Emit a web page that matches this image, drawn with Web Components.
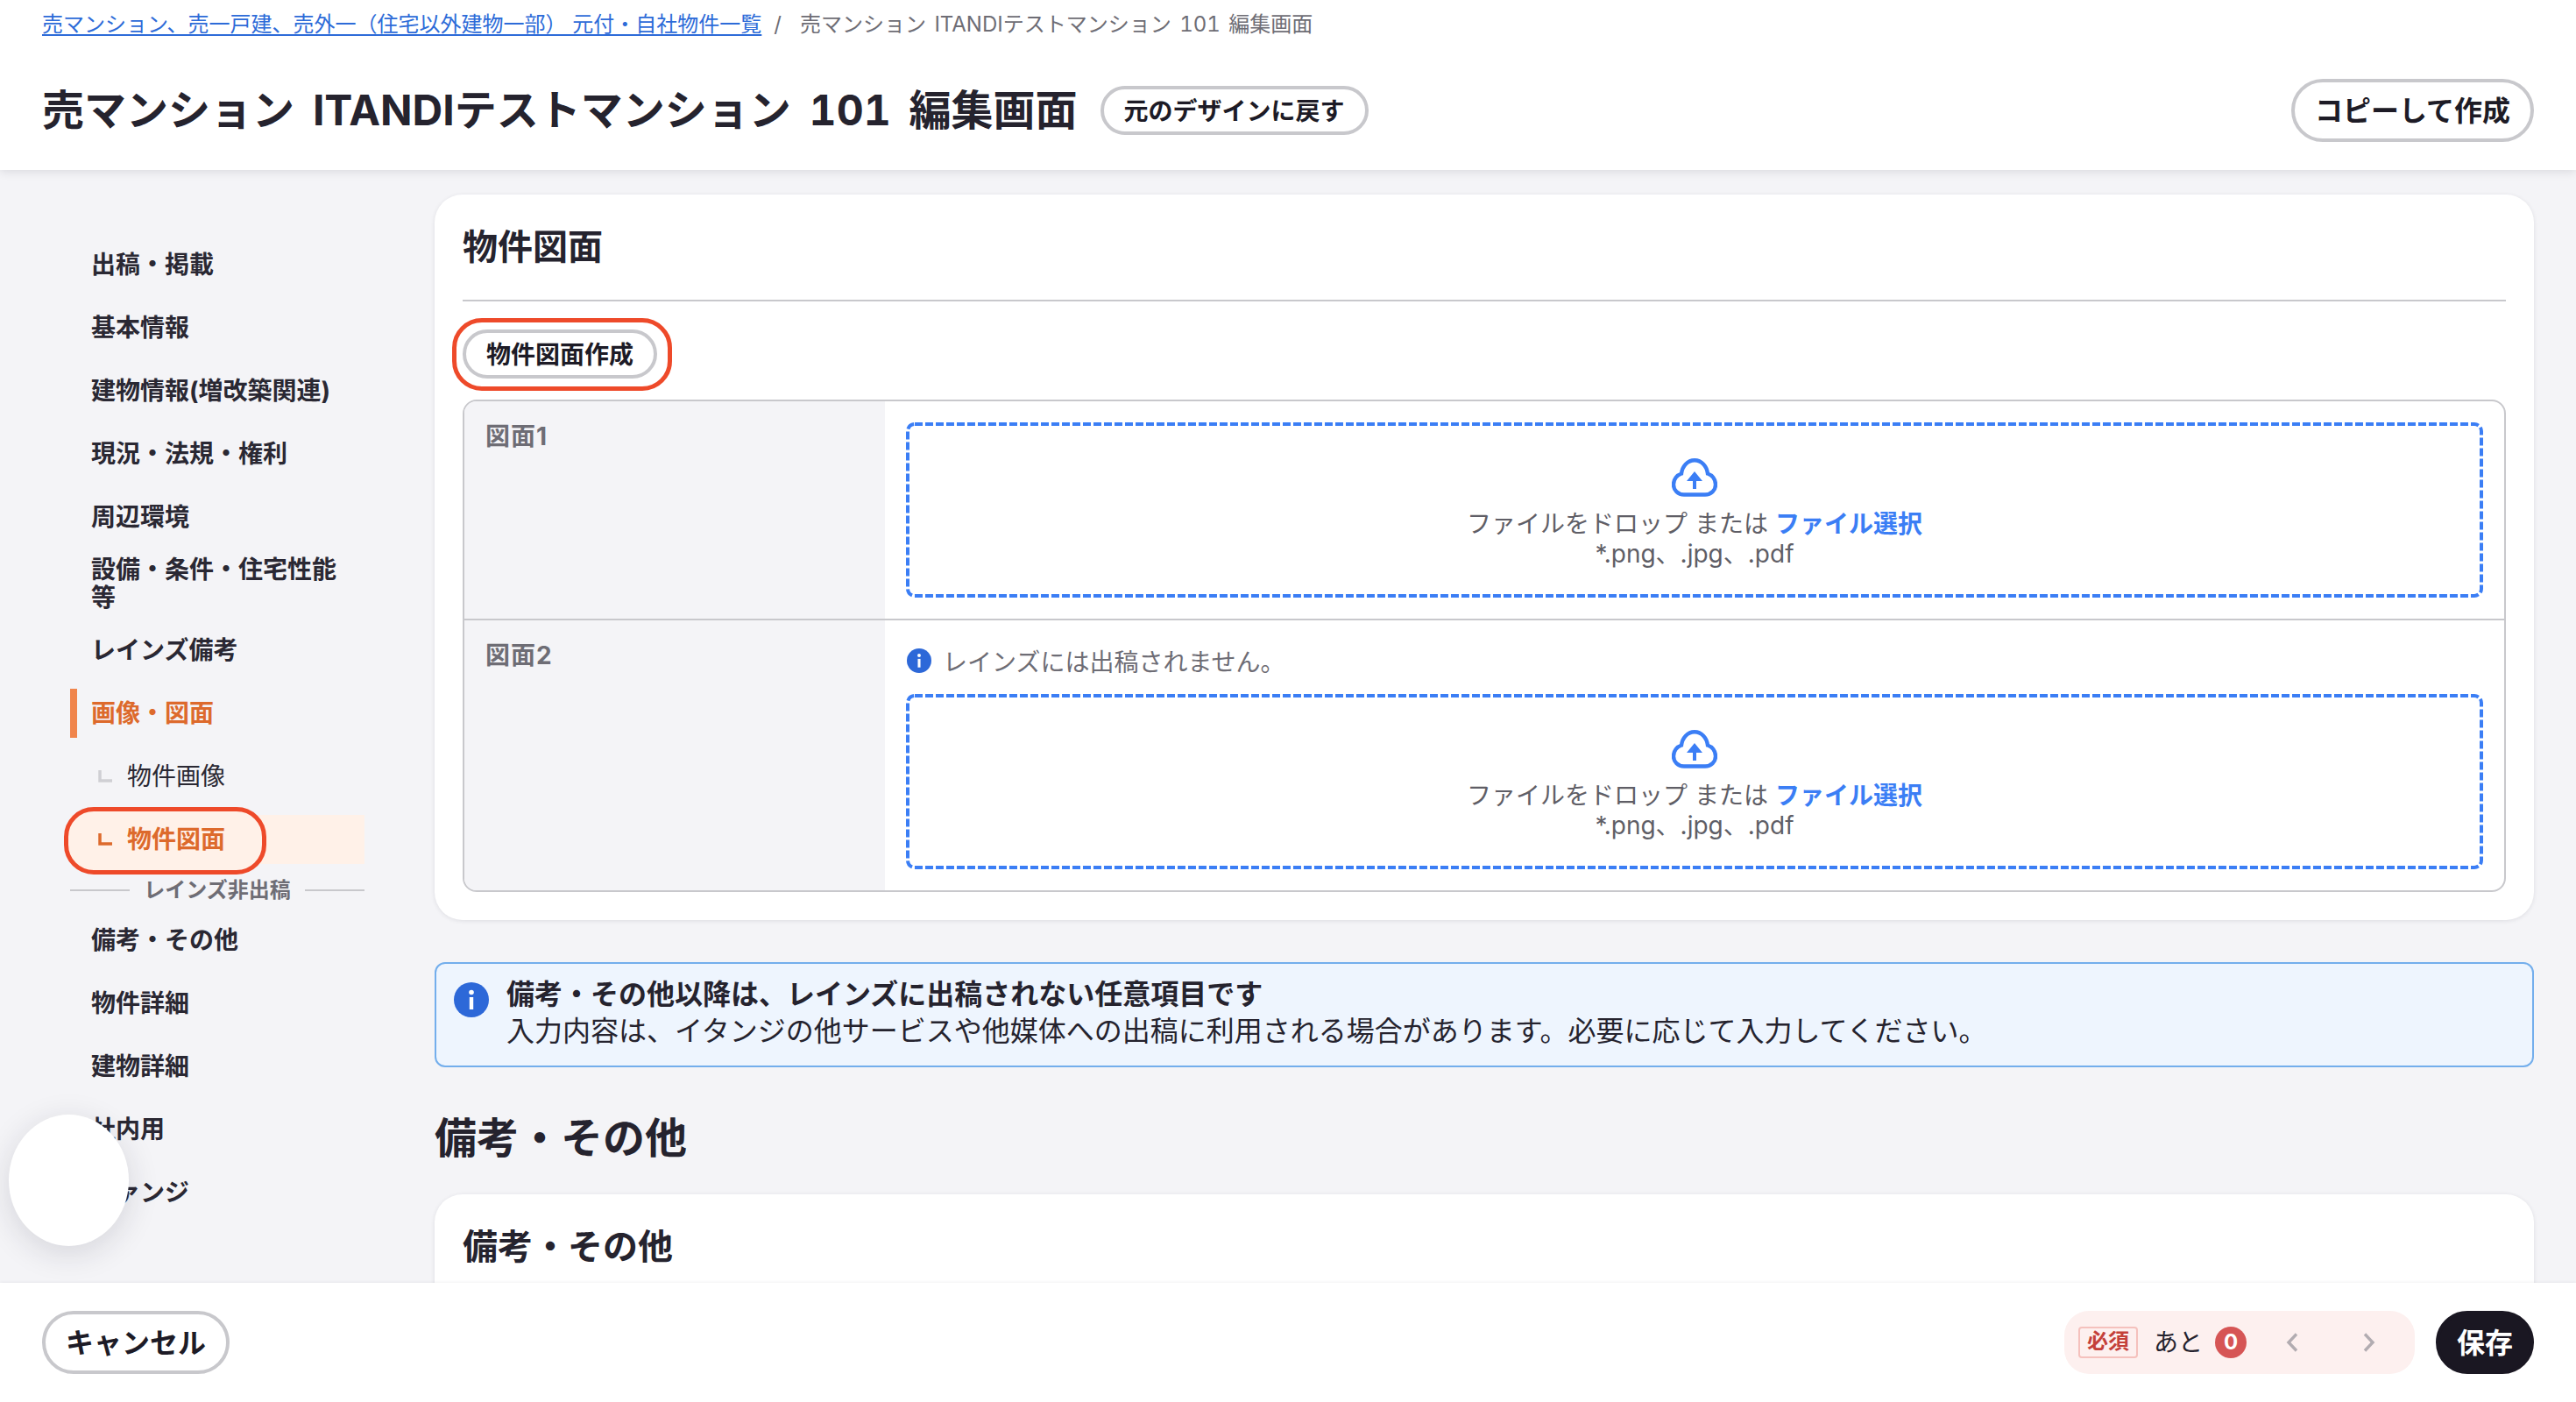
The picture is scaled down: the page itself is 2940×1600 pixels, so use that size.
<!DOCTYPE html>
<html lang="ja">
<head>
<meta charset="utf-8">
<title>売マンション ITANDIテストマンション 101 編集画面</title>
<style>
  html, body { margin: 0; height: 100%; }
  body {
    font-family: Inter, "Noto Sans CJK JP", sans-serif;
    color: #25232e;
    background: #f4f4f7;
    overflow: hidden;
  }
</style>
</head>
<body>
<app-shell>
  <page-header slot="header">
    <a slot="crumb" href="#">売マンション、売一戸建、売外一（住宅以外建物一部） 元付・自社物件一覧</a>
    <span slot="current">売マンション ITANDIテストマンション 101 編集画面</span>
    <span slot="title">売マンション ITANDIテストマンション 101 編集画面</span>
    <ui-button slot="title-action">元のデザインに戻す</ui-button>
    <ui-button slot="action" size="large">コピーして作成</ui-button>
  </page-header>

  <side-nav slot="nav">
    <nav-item>出稿・掲載</nav-item>
    <nav-item>基本情報</nav-item>
    <nav-item>建物情報(増改築関連)</nav-item>
    <nav-item>現況・法規・権利</nav-item>
    <nav-item>周辺環境</nav-item>
    <nav-item>設備・条件・住宅性能等</nav-item>
    <nav-item>レインズ備考</nav-item>
    <nav-item current>画像・図面</nav-item>
    <nav-subitem>物件画像</nav-subitem>
    <nav-subitem current>
      <mark-outline slot="mark" filled style="left:-7px;top:-9px;width:231px;height:77px"></mark-outline>
      物件図面
    </nav-subitem>
    <nav-divider>レインズ非出稿</nav-divider>
    <nav-item>備考・その他</nav-item>
    <nav-item>物件詳細</nav-item>
    <nav-item>建物詳細</nav-item>
    <nav-item>社内用</nav-item>
    <nav-item>ファンジ</nav-item>
  </side-nav>

  <form-card heading="物件図面">
    <div style="display:flex;position:relative;width:224px;margin-bottom:24px">
      <mark-outline style="left:-12px;top:-13px;width:251px;height:83px"></mark-outline>
      <ui-button>物件図面作成</ui-button>
    </div>
    <form-table>
      <form-row label="図面1">
        <drop-zone></drop-zone>
      </form-row>
      <form-row label="図面2">
        <field-note>レインズには出稿されません。</field-note>
        <drop-zone></drop-zone>
      </form-row>
    </form-table>
  </form-card>

  <info-box>
    <strong slot="title">備考・その他以降は、レインズに出稿されない任意項目です</strong>
    入力内容は、イタンジの他サービスや他媒体への出稿に利用される場合があります。必要に応じて入力してください。
  </info-box>

  <section-title>備考・その他</section-title>

  <form-card heading="備考・その他"></form-card>

  <page-footer slot="footer">
    <ui-button slot="start" size="large">キャンセル</ui-button>
    <required-counter slot="end" count="0"></required-counter>
    <ui-button slot="end" size="large" primary>保存</ui-button>
  </page-footer>

  <chat-blob slot="overlay"></chat-blob>
</app-shell>

<script>
const infoIcon = (size) => `
  <svg width="${size}" height="${size}" viewBox="0 0 40 40" aria-hidden="true">
    <circle cx="20" cy="20" r="20" fill="#2d68d8"/>
    <circle cx="20" cy="11.5" r="2.8" fill="#fff"/>
    <rect x="17.8" y="17" width="4.4" height="14" fill="#fff"/>
  </svg>
`;

class appShell extends HTMLElement {
  constructor() {
    super();
    this.shadow = this.attachShadow({ mode: 'open' });
  }

  connectedCallback() {
    this.shadow.innerHTML = `
      <style>
        :host {
          display: flex;
          flex-direction: column;
          position: relative;
          height: 1600px;
          overflow: hidden;
        }
        .body {
          flex: 1;
          display: flex;
          min-height: 0;
          overflow: hidden;
        }
        .nav {
          flex: none;
          width: 496px;
          box-sizing: border-box;
          padding: 80px 80px 0;
        }
        .main {
          flex: 1;
          min-width: 0;
          padding: 28px 48px 0 0;
          display: flex;
          flex-direction: column;
        }
      </style>
      <slot name="header"></slot>
      <div class="body">
        <div class="nav"><slot name="nav"></slot></div>
        <div class="main"><slot></slot></div>
      </div>
      <slot name="footer"></slot>
      <slot name="overlay"></slot>
    `;
  }
}

class pageHeader extends HTMLElement {
  constructor() {
    super();
    this.shadow = this.attachShadow({ mode: 'open' });
  }

  connectedCallback() {
    this.shadow.innerHTML = `
      <style>
        :host {
          display: block;
          flex: none;
          height: 194px;
          box-sizing: border-box;
          padding: 12px 48px 32px;
          background: #fff;
          box-shadow: 0 2px 10px rgba(30, 30, 50, 0.12);
          position: relative;
          z-index: 2;
        }
        .crumbs {
          display: flex;
          gap: 14px;
          height: 32px;
          line-height: 32px;
          font-size: 24px;
          color: #6e6d75;
        }
        .crumbs span {
          padding-right: 7px;
        }
        ::slotted(a) {
          color: #2d6bd8;
          text-decoration: underline;
          text-decoration-thickness: 2px;
          text-underline-offset: 3px;
        }
        ::slotted([slot="current"]) {
          word-spacing: 3px;
          font-variant-numeric: tabular-nums;
        }
        .row {
          display: flex;
          align-items: center;
          justify-content: space-between;
          height: 72px;
          margin-top: 46px;
        }
        .title {
          display: flex;
          align-items: center;
          gap: 26px;
        }
        h1 {
          margin: 0;
          font-size: 48px;
          line-height: 72px;
          font-weight: 700;
          word-spacing: 8px;
          font-variant-numeric: tabular-nums;
        }
      </style>
      <div class="crumbs">
        <slot name="crumb"></slot>
        <span>/</span>
        <slot name="current"></slot>
      </div>
      <div class="row">
        <div class="title">
          <h1><slot name="title"></slot></h1>
          <slot name="title-action"></slot>
        </div>
        <slot name="action"></slot>
      </div>
    `;
  }
}

class uiButton extends HTMLElement {
  constructor() {
    super();
    this.shadow = this.attachShadow({ mode: 'open' });
  }

  connectedCallback() {
    this.shadow.innerHTML = `
      <style>
        :host {
          display: inline-flex;
          align-items: center;
          justify-content: center;
          box-sizing: border-box;
          height: 56px;
          padding: 0 23px 2px;
          border: 4px solid #c8c8cc;
          border-radius: 36px;
          background: #fff;
          color: #1d1b26;
          font-size: 28px;
          font-weight: 700;
          white-space: nowrap;
          position: relative;
        }
        :host([size="large"]) {
          height: 72px;
          font-size: 32px;
          padding: 0 23px 4px;
        }
        :host([primary]) {
          background: #1a1722;
          border-color: #1a1722;
          color: #fff;
          width: 112px;
          padding: 0 0 4px;
        }
      </style>
      <slot></slot>
    `;
  }
}

class sideNav extends HTMLElement {
  constructor() {
    super();
    this.shadow = this.attachShadow({ mode: 'open' });
  }

  connectedCallback() {
    this.shadow.innerHTML = `
      <style>
        :host {
          display: flex;
          flex-direction: column;
          gap: 16px;
        }
      </style>
      <slot></slot>
    `;
  }
}

class navItem extends HTMLElement {
  constructor() {
    super();
    this.shadow = this.attachShadow({ mode: 'open' });
  }

  connectedCallback() {
    this.shadow.innerHTML = `
      <style>
        :host {
          display: flex;
          align-items: center;
          box-sizing: border-box;
          min-height: 56px;
          padding: 0 16px 0 24px;
          font-size: 28px;
          line-height: 32px;
          font-weight: 700;
          color: #2a2833;
        }
        :host([current]) {
          color: #dd6a2c;
          box-shadow: inset 8px 0 0 #f0854c;
        }
      </style>
      <div><slot></slot></div>
    `;
  }
}

class navSubitem extends HTMLElement {
  constructor() {
    super();
    this.shadow = this.attachShadow({ mode: 'open' });
  }

  connectedCallback() {
    this.shadow.innerHTML = `
      <style>
        :host {
          display: block;
          position: relative;
          height: 56px;
          font-size: 28px;
          line-height: 32px;
          color: #2a2833;
        }
        .row {
          position: relative;
          z-index: 2;
          display: flex;
          align-items: center;
          gap: 17px;
          height: 100%;
          padding-left: 32px;
        }
        path { stroke: #cfcfd4; }
        :host([current]) {
          background: #fff1e8;
          color: #dd6a2c;
          font-weight: 700;
        }
        :host([current]) path { stroke: #dd6a2c; }
      </style>
      <slot name="mark"></slot>
      <div class="row">
        <svg width="16" height="14" viewBox="0 0 16 14" fill="none" aria-hidden="true">
          <path d="M2 0V12H16" stroke-width="3.5"/>
        </svg>
        <div><slot></slot></div>
      </div>
    `;
  }
}

class navDivider extends HTMLElement {
  constructor() {
    super();
    this.shadow = this.attachShadow({ mode: 'open' });
  }

  connectedCallback() {
    this.shadow.innerHTML = `
      <style>
        :host {
          display: flex;
          align-items: center;
          gap: 16px;
          height: 27px;
          font-size: 24px;
          line-height: 27px;
          font-weight: 700;
          color: #6e6d75;
        }
        i {
          flex: 1;
          height: 2px;
          background: #c8c8cc;
        }
      </style>
      <i></i><slot></slot><i></i>
    `;
  }
}

class markOutline extends HTMLElement {
  constructor() {
    super();
    this.shadow = this.attachShadow({ mode: 'open' });
  }

  connectedCallback() {
    this.shadow.innerHTML = `
      <style>
        :host {
          display: block;
          position: absolute;
          box-sizing: border-box;
          border: 5px solid #ee4a2a;
          border-radius: 34px;
          z-index: 1;
        }
        :host([filled]) {
          background: #fff1e8;
        }
      </style>
    `;
  }
}

class formCard extends HTMLElement {
  constructor() {
    super();
    this.shadow = this.attachShadow({ mode: 'open' });
  }

  connectedCallback() {
    this.shadow.innerHTML = `
      <style>
        :host {
          display: block;
          flex: none;
          box-sizing: border-box;
          padding: 32px;
          background: #fff;
          border-radius: 32px;
          box-shadow: 0 1px 5px rgba(30, 30, 50, 0.1);
        }
        h2 {
          margin: 0 0 32px;
          padding-bottom: 32px;
          border-bottom: 2px solid #c8c8cc;
          font-size: 40px;
          line-height: 56px;
          font-weight: 700;
        }
      </style>
      <h2>${this.getAttribute('heading')}</h2>
      <slot></slot>
    `;
  }
}

class formTable extends HTMLElement {
  constructor() {
    super();
    this.shadow = this.attachShadow({ mode: 'open' });
  }

  connectedCallback() {
    this.shadow.innerHTML = `
      <style>
        :host {
          display: block;
          border: 2px solid #c8c8cc;
          border-radius: 16px;
          overflow: hidden;
        }
      </style>
      <slot></slot>
    `;
  }
}

class formRow extends HTMLElement {
  constructor() {
    super();
    this.shadow = this.attachShadow({ mode: 'open' });
  }

  connectedCallback() {
    this.shadow.innerHTML = `
      <style>
        :host {
          display: grid;
          grid-template-columns: 480px 1fr;
        }
        :host(:not(:last-child)) {
          border-bottom: 2px solid #c8c8cc;
        }
        .label {
          background: #f4f4f7;
          padding: 24px 24px;
          font-size: 28px;
          line-height: 32px;
          font-weight: 700;
          color: #6e6d75;
          letter-spacing: 1px;
        }
        .value {
          padding: 24px;
          min-width: 0;
        }
      </style>
      <div class="label">${this.getAttribute('label')}</div>
      <div class="value"><slot></slot></div>
    `;
  }
}

class fieldNote extends HTMLElement {
  constructor() {
    super();
    this.shadow = this.attachShadow({ mode: 'open' });
  }

  connectedCallback() {
    this.shadow.innerHTML = `
      <style>
        :host {
          display: flex;
          align-items: center;
          gap: 13px;
          height: 44px;
          margin-bottom: 16px;
          padding-left: 1px;
          font-size: 28px;
          color: #6e6d75;
        }
      </style>
      ${infoIcon(28)}
      <div><slot></slot></div>
    `;
  }
}

class dropZone extends HTMLElement {
  constructor() {
    super();
    this.shadow = this.attachShadow({ mode: 'open' });
  }

  connectedCallback() {
    this.shadow.innerHTML = `
      <style>
        :host {
          display: flex;
          flex-direction: column;
          align-items: center;
          position: relative;
          box-sizing: border-box;
          height: 200px;
          padding-top: 41px;
          font-size: 28px;
          line-height: 34px;
          color: #5f5e66;
          text-align: center;
        }
        .frame {
          position: absolute;
          inset: 0;
          width: 100%;
          height: 100%;
          fill: none;
        }
        .frame rect {
          x: 2px;
          y: 2px;
          width: calc(100% - 4px);
          height: calc(100% - 4px);
          rx: 8px;
          stroke: #3b7ef5;
          stroke-width: 4;
          stroke-dasharray: 9 3;
        }
        .icon {
          display: block;
          margin-bottom: 14px;
        }
        b {
          color: #3b7ef5;
          font-weight: 700;
        }
      </style>
      <svg class="frame" aria-hidden="true"><rect></rect></svg>
      <svg class="icon" width="52" height="44" viewBox="0 0 52 44" aria-hidden="true">
        <path d="M14 41.5H38C45 41.5 50 36.5 50 30C50 24 46 19 41 17.5C40 9 34 2.2 26 2.2C18 2.2 12 9 11 17.5C6 19 2 24 2 30C2 36.5 7 41.5 14 41.5Z" fill="none" stroke="#3b7ef5" stroke-width="4.4"/>
        <path d="M26 15L35 26H28V35H24V26H17Z" fill="#3b7ef5"/>
      </svg>
      <div>ファイルをドロップ または <b>ファイル選択</b></div>
      <div>*.png、.jpg、.pdf</div>
    `;
  }
}

class infoBox extends HTMLElement {
  constructor() {
    super();
    this.shadow = this.attachShadow({ mode: 'open' });
  }

  connectedCallback() {
    this.shadow.innerHTML = `
      <style>
        :host {
          display: flex;
          flex: none;
          gap: 20px;
          box-sizing: border-box;
          margin-top: 48px;
          padding: 14px 20px 18px;
          border: 2px solid #73aeec;
          border-radius: 12px;
          background: #eef5fe;
          font-size: 32px;
          line-height: 42px;
        }
        .icon {
          flex: none;
          margin-top: 7px;
          height: 40px;
        }
        ::slotted(strong) {
          display: block;
          font-weight: 700;
        }
      </style>
      <div class="icon">${infoIcon(40)}</div>
      <div>
        <slot name="title"></slot>
        <slot></slot>
      </div>
    `;
  }
}

class sectionTitle extends HTMLElement {
  constructor() {
    super();
    this.shadow = this.attachShadow({ mode: 'open' });
  }

  connectedCallback() {
    this.shadow.innerHTML = `
      <style>
        :host {
          display: block;
          flex: none;
          margin: 49px 0 32px;
          font-size: 48px;
          line-height: 64px;
          font-weight: 700;
        }
      </style>
      <slot></slot>
    `;
  }
}

class pageFooter extends HTMLElement {
  constructor() {
    super();
    this.shadow = this.attachShadow({ mode: 'open' });
  }

  connectedCallback() {
    this.shadow.innerHTML = `
      <style>
        :host {
          display: flex;
          flex: none;
          justify-content: space-between;
          box-sizing: border-box;
          height: 136px;
          padding: 32px 48px;
          background: #fff;
          box-shadow: 0 -1px 3px rgba(30, 30, 50, 0.06);
          position: relative;
          z-index: 2;
        }
        .end {
          display: flex;
          gap: 24px;
        }
      </style>
      <slot name="start"></slot>
      <div class="end"><slot name="end"></slot></div>
    `;
  }
}

class requiredCounter extends HTMLElement {
  constructor() {
    super();
    this.shadow = this.attachShadow({ mode: 'open' });
  }

  connectedCallback() {
    this.shadow.innerHTML = `
      <style>
        :host {
          display: flex;
          align-items: center;
          box-sizing: border-box;
          width: 400px;
          height: 72px;
          padding-left: 16px;
          border-radius: 28px;
          background: #fdf0ef;
        }
        .badge {
          box-sizing: border-box;
          width: 68px;
          height: 36px;
          border: 2px solid #f5c1bd;
          border-radius: 4px;
          color: #c4403a;
          font-size: 24px;
          line-height: 30px;
          font-weight: 700;
          text-align: center;
        }
        .rest {
          margin-left: 18px;
          width: 52px;
          font-size: 28px;
          line-height: 36px;
          white-space: nowrap;
        }
        .count {
          width: 36px;
          height: 36px;
          margin-left: 18px;
          border-radius: 50%;
          background: #d65555;
          color: #fff;
          font-size: 24px;
          line-height: 36px;
          font-weight: 700;
          text-align: center;
        }
        .arrows {
          display: flex;
          gap: 40px;
          margin-left: 28px;
        }
        .arrows div {
          display: flex;
          align-items: center;
          justify-content: center;
          width: 48px;
          height: 48px;
        }
      </style>
      <div class="badge">必須</div>
      <div class="rest">あと</div>
      <div class="count">${this.getAttribute('count')}</div>
      <div class="arrows">
        <div><svg width="14" height="22" viewBox="0 0 14 22" fill="none" stroke="#b2acb1" stroke-width="3.4" aria-hidden="true"><path d="M12 1.5L3 11L12 20.5"/></svg></div>
        <div><svg width="14" height="22" viewBox="0 0 14 22" fill="none" stroke="#b2acb1" stroke-width="3.4" aria-hidden="true"><path d="M2 1.5L11 11L2 20.5"/></svg></div>
      </div>
    `;
  }
}

class chatBlob extends HTMLElement {
  constructor() {
    super();
    this.shadow = this.attachShadow({ mode: 'open' });
  }

  connectedCallback() {
    this.shadow.innerHTML = `
      <style>
        :host {
          display: block;
          position: absolute;
          left: 10px;
          top: 1272px;
          width: 137px;
          height: 150px;
          border-radius: 50%;
          background: #fff;
          box-shadow: 0 8px 36px rgba(30, 30, 50, 0.14);
          z-index: 3;
        }
      </style>
    `;
  }
}

customElements.define('app-shell', appShell);
customElements.define('page-header', pageHeader);
customElements.define('ui-button', uiButton);
customElements.define('side-nav', sideNav);
customElements.define('nav-item', navItem);
customElements.define('nav-subitem', navSubitem);
customElements.define('nav-divider', navDivider);
customElements.define('mark-outline', markOutline);
customElements.define('form-card', formCard);
customElements.define('form-table', formTable);
customElements.define('form-row', formRow);
customElements.define('field-note', fieldNote);
customElements.define('drop-zone', dropZone);
customElements.define('info-box', infoBox);
customElements.define('section-title', sectionTitle);
customElements.define('page-footer', pageFooter);
customElements.define('required-counter', requiredCounter);
customElements.define('chat-blob', chatBlob);
</script>
</body>
</html>
